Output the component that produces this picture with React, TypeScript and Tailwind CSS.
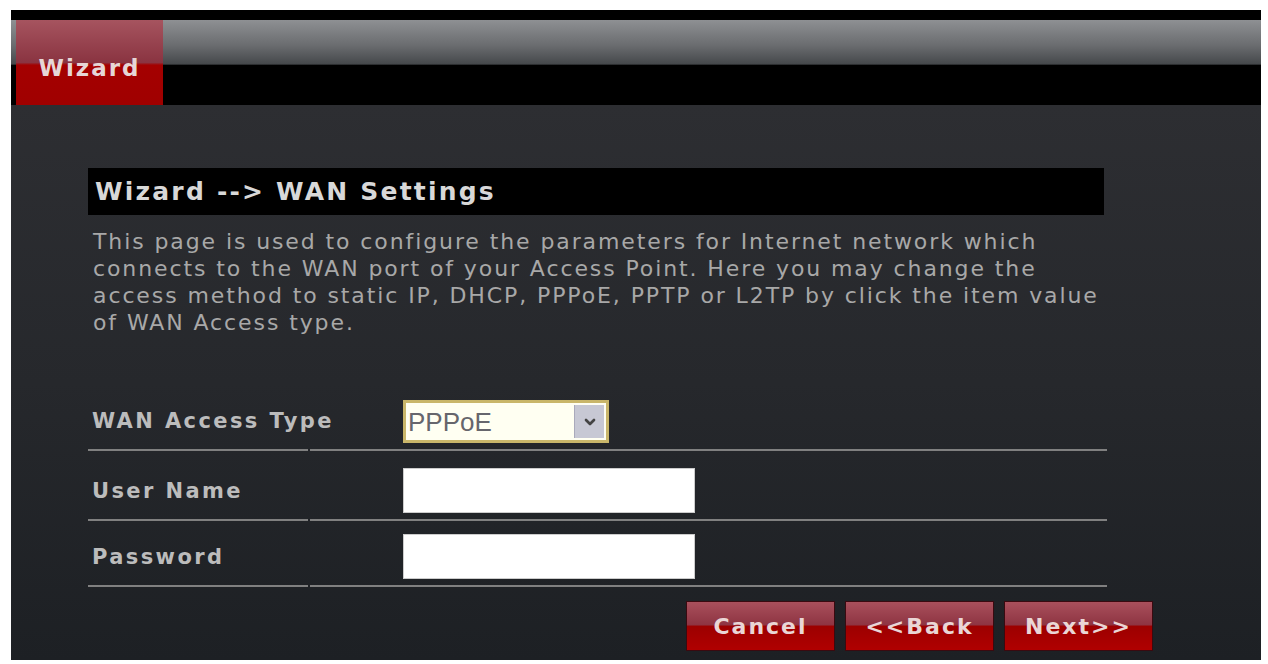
import { ChevronDown } from "lucide-react";

const font = { fontFamily: '"DejaVu Sans", Verdana, sans-serif' };

const rows = [
  { label: "WAN Access Type", kind: "select", h: "h-[52px]" },
  { label: "User Name", kind: "text", h: "h-[70px]" },
  { label: "Password", kind: "password", h: "h-[66px]" },
];

function RedButton({ label }: { label: string }) {
  return (
    <button className="relative w-[149px] h-[50px] overflow-hidden whitespace-nowrap border border-[#3a0a10] bg-[linear-gradient(to_bottom,#a9505c_0%,#8e3442_48%,#9c0000_50%,#b00000_100%)] text-[22px] font-bold tracking-[2px] text-[#ead6d6]">
      {label}
    </button>
  );
}

function Field({ kind }: { kind: string }) {
  if (kind === "select") {
    return (
      <div className="flex h-[43px] w-[206px] items-center border-[3px] border-[#c9b66a] bg-[#fffff2] pl-[2px]">
        <span
          className="flex-1 text-[26px] leading-none text-[#66666c]"
          style={{ fontFamily: '"Liberation Sans", Arial, sans-serif' }}
        >
          PPPoE
        </span>
        <span className="mr-[2px] flex h-[33px] w-[30px] items-center justify-center border-l border-[#aab] bg-[#c7c8d4] text-[#444]">
          <ChevronDown size={16} strokeWidth={4} />
        </span>
      </div>
    );
  }
  return (
    <input
      type={kind}
      className="h-[45px] w-[292px] border border-[#ccc] bg-white outline-none"
    />
  );
}

export default function App() {
  return (
    <div className="min-h-screen bg-white pl-[11px] pr-[7px] pt-[10px]" style={font}>
      <div className="flex h-[650px] flex-col border-t-[10px] border-black bg-black">
        {/* tab strip */}
        <div className="flex h-[85px] shrink-0 bg-[linear-gradient(to_bottom,#8e9093_0%,#6a6c6f_30%,#45484b_52%,#000_53%,#000_100%)] pl-[5px]">
          <div className="flex w-[147px] items-end justify-center bg-[linear-gradient(to_bottom,#a6545f_0%,#8a3441_50%,#a40000_53%,#a00000_100%)] pb-[20px]">
            <span className="text-[23px] font-bold tracking-[2px] text-[#e6d6d6]">Wizard</span>
          </div>
        </div>

        {/* content */}
        <div className="flex-1 bg-[linear-gradient(to_bottom,#2d2e32_0%,#26282c_50%,#1d2024_100%)] pl-[77px] pt-[63px]">
          <div className="w-[1016px]">
            <div className="flex h-[47px] items-center bg-black pl-[7px]">
              <h1 className="whitespace-nowrap text-[25px] font-bold tracking-[2.2px] text-[#d8d8d8]">Wizard --&gt; WAN Settings</h1>
            </div>
            <p className="mt-[13px] whitespace-nowrap pl-[5px] text-[22px] leading-[27px] text-[#a8a8a8] tracking-[1.9px]">
              This page is used to configure the parameters for Internet network which
              <br />
              connects to the WAN port of your Access Point. Here you may change the
              <br />
              access method to static IP, DHCP, PPPoE, PPTP or L2TP by click the item value
              <br />
              of WAN Access type.
            </p>
          </div>

          <div className="mt-[63px] w-[1019px]">
            {rows.map((r) => (
              <div key={r.label} className={`grid grid-cols-[220px_1fr] gap-x-[2px] ${r.h}`}>
                <div className="flex items-end border-b-2 border-[#808080] pb-[12px] pl-[4px]">
                  <span className="whitespace-nowrap text-[21px] font-bold tracking-[2.4px] text-[#bcbcbc]">{r.label}</span>
                </div>
                <div className="flex items-end border-b-2 border-[#808080] pb-[6px] pl-[93px]">
                  <Field kind={r.kind} />
                </div>
              </div>
            ))}
          </div>

          <div className="mt-[14px] flex w-[1065px] justify-end gap-[10px]">
            <RedButton label="Cancel" />
            <RedButton label="<<Back" />
            <RedButton label="Next>>" />
          </div>
        </div>
      </div>
    </div>
  );
}
